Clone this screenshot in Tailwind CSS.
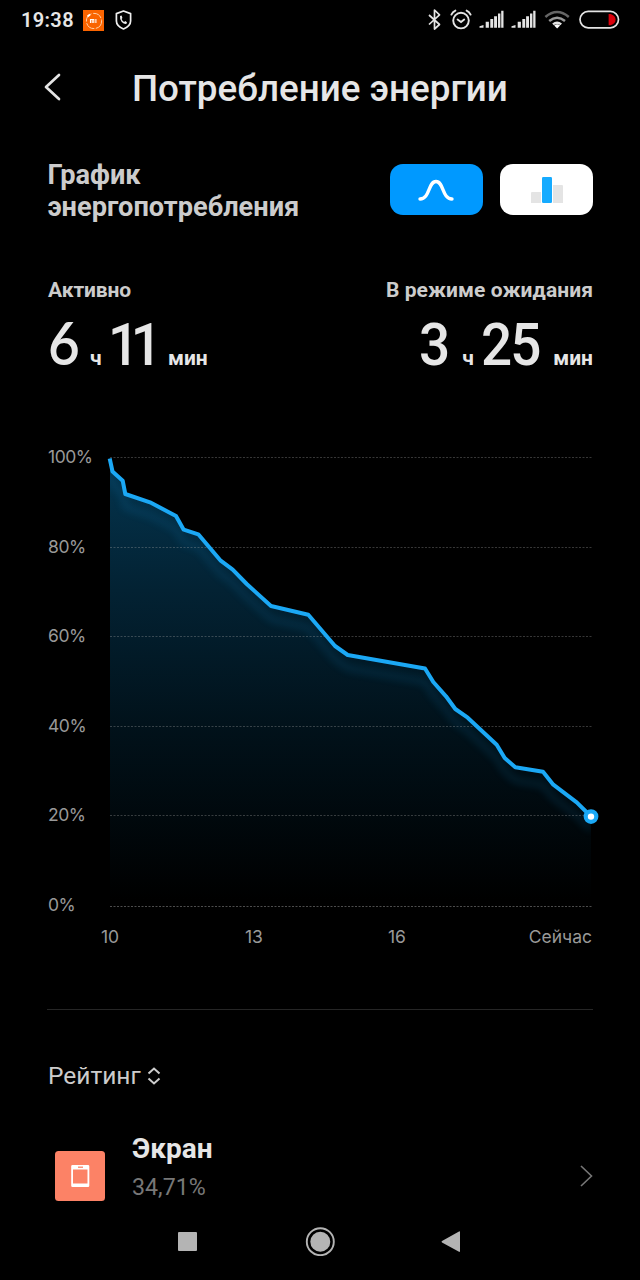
<!DOCTYPE html>
<html lang="ru">
<head>
<meta charset="utf-8">
<title>Потребление энергии</title>
<script src="https://cdn.jsdelivr.net/npm/@tailwindcss/browser@4"></script>
</head>
<body class="bg-black">
<div class="flex h-[1280px] w-[640px] flex-col overflow-hidden bg-black font-[Roboto,sans-serif] text-[#e6e6e6]">
  <!-- status bar -->
  <header class="flex h-10 shrink-0 items-center justify-between pl-[21px] pr-[20px]">
    <div class="flex items-center">
      <span class="w-[62px] whitespace-nowrap text-[20px] font-semibold leading-10 tracking-[0.35px]">19:38</span>
      <svg class="h-[21px] w-[21px]" viewBox="0 0 21 21"><path fill="#fa6400" d="M0 0h21v21H0z"/><circle cx="11" cy="11" r="7.6" fill="none" stroke="#ffd0a8" stroke-width="1" stroke-dasharray="10 1.5"/><path d="M4.5 6.5 7 4.5" stroke="#fff" stroke-width="1.8"/><path fill="none" stroke="#fff" stroke-width="1.1" d="M7.500 13V9.500h3.300V13M9.200 10V13M12.900 9v4"/></svg>
      <svg class="ml-[11px] h-[20px] w-[17px]" viewBox="0 0 17 20" fill="none" stroke="#eee" stroke-width="1.7" stroke-linejoin="round"><path d="M8.5 1 15.6 3.6V11q0 5-7.1 8-7.1-3-7.1-8V3.6z"/><path fill="#eee" stroke="none" d="M5 5.9 6.6 5.5 7.4 8 6.6 9Q7.3 10.9 9.1 11.9L10.2 11 12 12.2 11.3 14Q9 14.4 6.7 12 4.6 9.4 5 5.9"/></svg>
    </div>
    <svg class="h-10 w-[194px]" viewBox="426 0 194 40" fill="none" stroke="#e4e4e4" stroke-width="1.7">
      <path stroke-linejoin="round" d="m429 15 10.5 9.5-5 4.5V10l5 4.8L429 24.5"/>
      <circle cx="461" cy="20.6" r="7.8" stroke-width="1.9"/><path stroke-linecap="round" stroke-width="1.9" d="M451.4 14.6q1.3-2.8 4-4M470.6 14.6q-1.3-2.8-4-4M457.6 19.5l3.4 2.5 3.2-2.5"/>
      <g id="bars" fill="#e4e4e4" stroke="none"><path d="M479.5 27.800v-1.500l4-1.300v2.800zM485.700 27.800v-6h3.200v6zM490.300 27.800v-8.700h2.900v8.700zM494.100 27.800v-11.500h2.900v11.500zM498 27.800V13.600h2.400v14.200zM501.200 27.800V10.800h2.300v17z"/></g>
      <use href="#bars" x="32"/>
      <g stroke-width="2.5"><path stroke="#666" d="M545.4 17q11.7-10 23.4 0"/><path stroke="#999" d="M549.2 21q7.9-6.5 15.8 0"/><path d="M553 24.4q4.1-3.3 8.2 0"/></g><path fill="#fff" stroke="none" d="M554.2 25.4q3-2.3 5.9 0L557.1 28.6z"/>
      <rect x="580" y="11.4" width="38.5" height="16.4" rx="8.2"/><path fill="#d9000b" stroke="none" d="M608.6 14h2q5 1.5 5 5.6t-5 5.6h-2z"/>
    </svg>
  </header>

  <!-- title bar -->
  <div class="flex h-24 shrink-0 items-center pl-[43px]">
    <svg class="h-[30px] w-[18px]" viewBox="0 0 18 30" fill="none" stroke="#e4e4e4" stroke-width="2.7" stroke-linecap="round" stroke-linejoin="round"><path d="M16 2 3 14l13 12"/></svg>
    <h1 class="ml-[71px] mt-px whitespace-nowrap text-[36.8px] font-medium leading-[48px]">Потребление энергии</h1>
  </div>

  <!-- graph type -->
  <section class="flex h-[140px] shrink-0 items-start justify-between pl-[47.500px] pr-[47px]">
    <h2 class="pt-[23px] text-[27.200px] font-bold leading-[32px] text-[#ccc]">График<br>энергопотребления</h2>
    <div class="mt-7 flex gap-[17.500px]">
      <div class="flex h-[51px] w-[93px] items-center justify-center rounded-[13px] bg-[#0099ff]">
        <svg class="h-[22px] w-[36px]" viewBox="0 0 36 22" fill="none" stroke="#fff" stroke-width="3.4" stroke-linecap="round"><path d="M2 20C12 20 10 2.5 18 2.5S24 20 34 20"/></svg>
      </div>
      <div class="flex h-[51px] w-[93px] items-center justify-center rounded-[13px] bg-white">
        <svg class="h-[26px] w-[32px]" viewBox="0 0 32 26"><path fill="#e4e4e4" d="M0 16q0-1 1-1h9v11H0zM22 8h9q1 0 1 1v17H22z"/><rect x="11" width="10" height="26" rx="1.3" fill="#16abff"/></svg>
      </div>
    </div>
  </section>

  <!-- totals -->
  <section class="flex h-[164px] shrink-0 justify-between pl-[48px] pr-[47px]">
    <div>
      <p class="text-[21px] font-bold leading-[28px] tracking-[-0.1px] text-[#ccc]">Активно</p>
      <p class="mt-[15px] flex h-[48px] items-baseline whitespace-nowrap leading-[48px]"><span class="w-[42px] font-[Lato] text-[59px] font-semibold"><span class="inline-block origin-left scale-x-[.93]">6</span></span><span class="w-[18px] text-[21px] font-bold">ч</span><span class="w-[60px] text-[59px] font-medium tracking-[-9px]"><span class="inline-block origin-left scale-x-[.93]">11</span></span><span class="text-[21px] font-bold">мин</span></p>
    </div>
    <div>
      <p class="text-right text-[21px] font-bold leading-[28px] tracking-[0.08px] text-[#ccc]">В режиме ожидания</p>
      <p class="mt-[17px] flex h-[48px] items-baseline justify-end whitespace-nowrap leading-[48px]"><span class="w-[43px] text-[59px] font-medium"><span class="inline-block origin-left scale-x-[.93]">3</span></span><span class="w-[19px] text-[21px] font-bold">ч</span><span class="w-[72px] text-[59px] font-medium tracking-[-2px]"><span class="inline-block origin-left scale-x-[.93]">25</span></span><span class="text-[21px] font-bold">мин</span></p>
    </div>
  </section>

  <!-- battery chart -->
  <section class="flex h-[480px] shrink-0 px-12 font-[Inter,sans-serif] text-[17.5px] tracking-[-0.45px] text-[#999]">
    <div class="flex w-[54px] shrink-0 flex-col pt-[2px]">
      <span class="h-[89.500px] leading-[30px]">100%</span><span class="h-[89.500px] leading-[30px]">80%</span><span class="h-[89.500px] leading-[30px]">60%</span><span class="h-[89.500px] leading-[30px]">40%</span><span class="h-[89.500px] leading-[30px]">20%</span><span class="leading-[30px]">0%</span>
    </div>
    <div class="w-[498px] shrink-0">
      <svg class="h-[480px] w-[498px]" viewBox="102 440 498 480">
        <defs>
          <linearGradient id="fill" x1="0" y1="458" x2="0" y2="900" gradientUnits="userSpaceOnUse"><stop offset="0" stop-color="#04354f"/><stop offset=".3" stop-color="#032233"/><stop offset=".6" stop-color="#01121b"/><stop offset="1" stop-color="#000"/></linearGradient>
          <filter id="soft" x="-10%" y="-10%" width="120%" height="120%"><feGaussianBlur stdDeviation="4"/></filter>
          <clipPath id="area"><path d="M110 458.500L112.500 471.500 122.700 480.700 125.300 494 150 502.300 176 516 183.700 529.700 198.300 534.300 220.700 560.700 232.700 569.700 246.700 584 271 606 308.300 614.700 335 646 347.700 655 425 668.500 433.300 682 446 696.300 455.300 709 467.700 717.700 496.700 744.700 504.700 758 515.300 767.300 543 771.700 553.300 784.700 576.700 802.300 591 816.500V907H110z"/></clipPath>
        </defs>
        <g clip-path="url(#area)">
          <path fill="url(#fill)" d="M110 450h481v457H110z"/>
          <use href="#curve" y="13" opacity=".2" filter="url(#soft)"/>
        </g>
        <path fill="none" stroke="#aaa" stroke-opacity=".32" stroke-dasharray="2 1.500" d="M110 457.500h482M110 547.500h482M110 636.500h482M110 726.500h482M110 815.500h482"/>
        <path fill="none" stroke="#aaa" stroke-opacity=".45" stroke-dasharray="2 1.500" d="M110 906.500h482"/>
        <path id="curve" fill="none" stroke="#1ba8f5" stroke-linejoin="round" stroke-width="4" d="M109.700 458.500L112.500 471.500 122.700 480.700 125.300 494 150 502.300 176 516 183.700 529.700 198.300 534.300 220.700 560.700 232.700 569.700 246.700 584 271 606 308.300 614.700 335 646 347.700 655 425 668.500 433.300 682 446 696.300 455.300 709 467.700 717.700 496.700 744.700 504.700 758 515.300 767.300 543 771.700 553.300 784.700 576.700 802.300 591 816.500"/>
        <circle cx="591" cy="816.600" r="5.300" fill="#fff" stroke="#1ba8f5" stroke-width="4.200"/>
      </svg>
    </div>
  </section>
  <div class="flex h-[89px] shrink-0 pl-[101px] pr-[48px] font-[Inter,sans-serif] text-[17.500px] leading-[33px] text-[#999]"><span class="w-[144px]">10</span><span class="w-[143px]">13</span><span>16</span><span class="ml-auto">Сейчас</span></div>
  <hr class="ml-[47px] mr-[47px] shrink-0 border-t border-[#262626]">

  <!-- rating -->
  <section class="flex h-[194px] shrink-0 flex-col pl-12 pr-[47px] pt-[50px]">
    <div class="flex h-8 items-center text-[24.500px] leading-8 text-[#ccc]"><span>Рейтинг</span><svg class="ml-[6px] h-[18px] w-[14px]" viewBox="0 0 14 18" fill="none" stroke="#ccc" stroke-width="2"><path d="m1.500 6.500 5.500-5 5.500 5M1.500 11.500l5.500 5 5.500-5"/></svg></div>
    <div class="mt-[40px] flex">
      <svg class="ml-[7px] mt-[19px] h-[50px] w-[50px]" viewBox="0 0 50 50"><rect width="50" height="50" rx="3.500" fill="#fc8266"/><path fill="#fff" fill-rule="evenodd" d="M17.500 14h15.500q1.300 0 1.300 1.300v19.400q0 1.300-1.300 1.300H17.500q-1.300 0-1.300-1.300V15.300q0-1.300 1.300-1.300m.5 4.500v14h14.500v-14z"/><path stroke="#fc8266" stroke-width="1.300" d="M23 16.200h5"/></svg>
      <div class="ml-[27px] grow"><p class="text-[28px] font-bold leading-[34px]">Экран</p><p class="mt-1 text-[23.200px] leading-[34px] text-[#777]">34,71%</p></div>
      <svg class="mt-[33px] h-[22px] w-[14px]" viewBox="0 0 14 22" fill="none" stroke="#777" stroke-width="1.600"><path d="m2 1 10.500 10L2 21"/></svg>
    </div>
  </section>

  <!-- navigation -->
  <nav class="flex h-[74px] shrink-0 items-center pl-[178px]">
    <svg class="h-[30px] w-[284px]" viewBox="178 1226 284 30" fill="#b4b4b4"><rect x="178" y="1232" width="19" height="19" rx="1"/><circle cx="320.300" cy="1241.700" r="10"/><circle cx="320.300" cy="1241.700" r="13.500" fill="none" stroke="#b4b4b4" stroke-width="1.900"/><path d="M459 1231.500q1-.5 1 .6v19q0 1.200-1 .6l-17-9.300q-1-.7 0-1.400z"/></svg>
  </nav>
</div>
</body>
</html>
